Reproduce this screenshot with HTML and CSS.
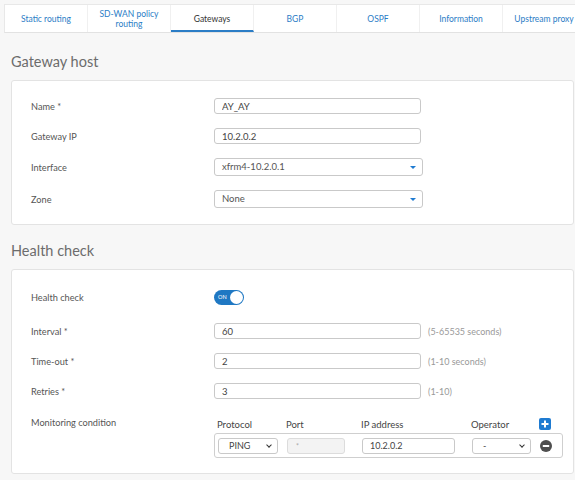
FILE: index.html
```html
<!DOCTYPE html>
<html lang="en">
<head>
    <meta charset="UTF-8">
    <title>Gateways</title>
    <link rel="stylesheet" href="styles.css">
</head>
<body>
    <!-- Routing tabs -->
    <div class="tab-bar">
        <div class="tab">Static routing</div>
        <div class="tab">SD-WAN policy<br>routing</div>
        <div class="tab active">Gateways</div>
        <div class="tab">BGP</div>
        <div class="tab">OSPF</div>
        <div class="tab">Information</div>
        <div class="tab">Upstream proxy</div>
    </div>

    <div class="content">
        <h2 class="section-title">Gateway host</h2>
        <div class="panel host-panel">
            <div class="form-row">
                <label>Name *</label>
                <input class="field" type="text" value="AY_AY">
            </div>
            <div class="form-row">
                <label>Gateway IP</label>
                <input class="field" type="text" value="10.2.0.2">
            </div>
            <div class="form-row">
                <label>Interface</label>
                <div class="select-box">xfrm4-10.2.0.1<span class="caret"></span></div>
            </div>
            <div class="form-row">
                <label>Zone</label>
                <div class="select-box">None<span class="caret"></span></div>
            </div>
        </div>

        <h2 class="section-title">Health check</h2>
        <div class="panel health-panel">
            <div class="form-row toggle-row">
                <label>Health check</label>
                <div class="toggle"><span class="toggle-text">ON</span><span class="knob"></span></div>
            </div>
            <div class="form-row">
                <label>Interval *</label>
                <input class="field" type="text" value="60">
                <span class="hint">(5-65535 seconds)</span>
            </div>
            <div class="form-row">
                <label>Time-out *</label>
                <input class="field" type="text" value="2">
                <span class="hint">(1-10 seconds)</span>
            </div>
            <div class="form-row">
                <label>Retries *</label>
                <input class="field" type="text" value="3">
                <span class="hint">(1-10)</span>
            </div>
            <div class="form-row monitor-row">
                <label>Monitoring condition</label>
                <div class="monitor">
                    <div class="monitor-head">
                        <span>Protocol</span>
                        <span>Port</span>
                        <span>IP address</span>
                        <span>Operator</span>
                        <span class="icon-btn add">
                            <svg width="12" height="12" viewBox="0 0 12 12"><rect width="12" height="12" rx="2" fill="#1f7bd1"/><path d="M6 2.5v7M2.5 6h7" stroke="#fff" stroke-width="2"/></svg>
                        </span>
                    </div>
                    <div class="monitor-box">
                        <div class="mini-select proto">PING<span class="chev"></span></div>
                        <div class="mini-input disabled">*</div>
                        <div class="mini-input ip">10.2.0.2</div>
                        <div class="mini-select oper">-<span class="chev"></span></div>
                        <span class="icon-btn remove">
                            <svg width="12" height="12" viewBox="0 0 12 12"><circle cx="6" cy="6" r="6" fill="#4f4f4f"/><path d="M2.8 6h6.4" stroke="#fff" stroke-width="2"/></svg>
                        </span>
                    </div>
                </div>
            </div>
        </div>
    </div>
</body>
</html>
```

FILE: styles.css
```css
* {
    margin: 0;
    padding: 0;
    box-sizing: border-box;
}

body {
    font-family: Lato, "Open Sans", sans-serif;
    background-color: #f7f7f7;
    color: #444;
    padding: 4px 0 0 4px;
    overflow: hidden;
}

/* === TABS === */
.tab-bar {
    display: flex;
    overflow: hidden;
    background: white;
    border-top: 1px solid #e8e8e8;
    border-left: 1px solid #e8e8e8;
    border-bottom: 1px solid #e2e2e2;
    height: 29px;
}

.tab {
    flex: none;
    width: 83px;
    display: flex;
    align-items: center;
    justify-content: center;
    text-align: center;
    font-size: 8.5px;
    line-height: 10px;
    color: #2b7dc6;
    border-right: 1px solid #f0f0f0;
}

.tab.active {
    color: #333;
    border-bottom: 2px solid #2b7dc6;
    padding-top: 2px;
}

/* === CONTENT === */
.content {
    padding: 3px 1px 0 7px;
}

.section-title {
    font-size: 14.5px;
    font-weight: 400;
    color: #6c6c6c;
    line-height: 20px;
    margin: 16px 0 8px;
}

.panel {
    background: white;
    border: 1px solid #e3e3e3;
    border-radius: 3px;
    padding: 17px 0 16px 19px;
    display: flex;
    flex-direction: column;
    gap: 14px;
}

.health-panel {
    padding-top: 20px;
    padding-bottom: 15px;
}

.form-row {
    display: flex;
    align-items: center;
}

.form-row label {
    flex: none;
    width: 183px;
    font-size: 9.2px;
    color: #555;
}

.field {
    width: 207px;
    height: 16px;
    border: 1px solid #c9c9c9;
    border-radius: 3px;
    padding: 0 7px;
    font-family: inherit;
    font-size: 9.5px;
    color: #444;
    outline: none;
}

.select-box {
    position: relative;
    width: 209px;
    height: 18px;
    border: 1px solid #c9c9c9;
    border-radius: 3px;
    padding: 0 7px;
    font-size: 9.5px;
    line-height: 16px;
    color: #555;
}

.caret {
    position: absolute;
    right: 6px;
    top: 7px;
    border-left: 3px solid transparent;
    border-right: 3px solid transparent;
    border-top: 3px solid #1f7bd1;
}

.hint {
    margin-left: 7px;
    font-size: 9px;
    color: #999;
}

/* toggle */
.toggle-row {
    margin-bottom: 4px;
}

.toggle {
    position: relative;
    width: 30px;
    height: 15px;
    border-radius: 8px;
    background: #1f78c3;
}

.toggle-text {
    position: absolute;
    left: 4px;
    top: 4px;
    font-size: 5.5px;
    line-height: 7px;
    color: white;
}

.knob {
    position: absolute;
    right: 1px;
    top: 1px;
    width: 13px;
    height: 13px;
    border-radius: 50%;
    background: white;
}

/* monitoring condition */
.monitor-row {
    align-items: flex-start;
    margin-top: 4px;
}

.monitor {
    width: 349px;
}

.monitor-head,
.monitor-box {
    display: grid;
    grid-template-columns: 69px 75px 110px 68px 12px;
    align-items: center;
}

.monitor-head {
    height: 14px;
    margin-bottom: 2px;
    padding-left: 3px;
    font-size: 9.5px;
    color: #444;
}

.monitor-box {
    height: 25px;
    border: 1px solid #cfcfcf;
    border-radius: 3px;
    padding-left: 3px;
}

.icon-btn {
    display: flex;
    width: 12px;
    height: 12px;
}

.mini-select,
.mini-input {
    position: relative;
    height: 16px;
    border: 1px solid #c9c9c9;
    border-radius: 3px;
    font-size: 9px;
    line-height: 14px;
    color: #444;
}

.mini-select.proto {
    width: 60px;
    padding-left: 10px;
}

.mini-select.oper {
    width: 59px;
    padding-left: 10px;
}

.chev {
    position: absolute;
    right: 6px;
    top: 4px;
    width: 4px;
    height: 4px;
    border-right: 1.5px solid #333;
    border-bottom: 1.5px solid #333;
    transform: rotate(45deg);
}

.mini-input.disabled {
    width: 58px;
    padding-left: 8px;
    background: #f3f3f3;
    border-color: #dcdcdc;
    color: #aaa;
    font-size: 7px;
}

.mini-input.ip {
    width: 93px;
    padding-left: 7px;
}
```
